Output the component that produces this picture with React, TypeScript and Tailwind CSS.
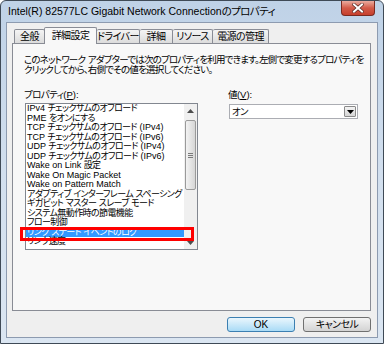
import React from 'react';

const font = "font-['Liberation_Sans','Noto_Sans_CJK_JP',sans-serif] [font-feature-settings:'palt']";

// Japanese runs get tighter spacing, like the narrow kana of the original UI font
function T({ s, tight }: { s: string; tight?: boolean }) {
  const parts = s.split(/([\u3000-\u9fff\uff00-\uffef]+)/);
  return (
    <>
      {parts.map((p, i) =>
        i % 2 === 1 ? (
          <span key={i} className={tight ? 'tracking-[-0.8px]' : 'tracking-[-0.6px]'}>
            {p}
          </span>
        ) : (
          p
        )
      )}
    </>
  );
}

const tabs = [
  { label: '全般', w: 'w-[31px]', active: false },
  { label: '詳細設定', w: 'w-[53px]', active: true },
  { label: 'ドライバー', w: 'w-[43px]', active: false },
  { label: '詳細', w: 'w-[33px]', active: false },
  { label: 'リソース', w: 'w-[40px]', active: false },
  { label: '電源の管理', w: 'w-[56px]', active: false },
];

const items = [
  'IPv4 チェックサムのオフロード',
  'PME をオンにする',
  'TCP チェックサムのオフロード (IPv4)',
  'TCP チェックサムのオフロード (IPv6)',
  'UDP チェックサムのオフロード (IPv4)',
  'UDP チェックサムのオフロード (IPv6)',
  'Wake on Link 設定',
  'Wake On Magic Packet',
  'Wake on Pattern Match',
  'アダプティブ インターフレーム スペーシング',
  'ギガビット マスター スレーブ モード',
  'システム無動作時の節電機能',
  'フロー制御',
  'リンク ステート イベントのログ',
  'リンク速度',
];

export default function App() {
  return (
    <div className={`w-[384px] h-[344px] bg-white ${font} text-black`}>
      <div className="w-[384px] h-[344px] flex flex-col border border-[#3f4a56] rounded-t-[6px] bg-gradient-to-b from-[#bfd2e7] via-[#d2dfee] to-[#dbe6f2] overflow-hidden">
        {/* title bar */}
        <div className="h-[21px] shrink-0 flex items-start">
          <div className="pl-[7px] text-[10.5px] leading-[21px] whitespace-nowrap">
            <T s="Intel(R) 82577LC Gigabit Network Connectionのプロパティ" />
          </div>
          <div className="ml-auto mr-[8px] w-[34px] h-[15px] rounded-b-[4px] border border-t-0 border-[#7a2a20] bg-gradient-to-b from-[#e9ab9f] via-[#d25a48] to-[#c63f2c] flex items-center justify-center">
            <svg width="12" height="10" viewBox="0 0 12 10">
              <path d="M2 1.5 L10 8.5 M10 1.5 L2 8.5" stroke="#5a2a24" strokeWidth="3.4" strokeLinecap="square" />
              <path d="M2 1.5 L10 8.5 M10 1.5 L2 8.5" stroke="#ffffff" strokeWidth="2" strokeLinecap="square" />
            </svg>
          </div>
        </div>

        {/* client area */}
        <div className="mx-[5px] h-[316px] shrink-0 border border-[#8d9bb0] bg-[#efefef] flex flex-col pl-[5px] pr-[6px] pt-[4px]">
          {/* tabs */}
          <div className="h-[16px] shrink-0 flex items-end pl-[2px]">
            {tabs.map((t, i) =>
              t.active ? (
                <div
                  key={t.label}
                  className={`${t.w} h-[17px] -mb-px -ml-px relative z-10 bg-[#f8f8f8] border border-b-0 border-[#898c95] rounded-t-[2px] flex items-center justify-center text-[10px] leading-none whitespace-nowrap`}
                >
                  <T s={t.label} />
                </div>
              ) : (
                <div
                  key={t.label}
                  className={`${t.w} h-[14px] ${i === 0 ? 'border-l' : ''} border-t border-r border-[#898c95] rounded-t-[2px] bg-gradient-to-b from-[#f4f4f4] to-[#dcdcdc] flex items-center justify-center text-[10px] leading-none whitespace-nowrap`}
                >
                  <T s={t.label} />
                </div>
              )
            )}
          </div>

          {/* tab page */}
          <div className="h-[268px] shrink-0 border border-[#898c95] bg-[#f8f8f8] pl-[11px] pt-[11px]">
            <div className="text-[9.5px] leading-[10px] whitespace-nowrap">
              <div>
                <T tight s="このネットワーク アダプターでは次のプロパティを利用できます。左側で変更するプロパティを" />
              </div>
              <div>
                <T tight s="クリックしてから、右側でその値を選択してください。" />
              </div>
            </div>

            <div className="flex mt-[15px] text-[9.5px]">
              <div className="w-[174px]">
                <div className="leading-[10px]">
                  <T s="プロパティ(" />
                  <span className="underline">P</span>):
                </div>
                <div className="mt-[3px] ml-px w-[173px] h-[147px] border border-[#828790] bg-white relative flex">
                  <div className="flex-1 overflow-hidden text-[9px]">
                    {items.map((it, i) => (
                      <div
                        key={it}
                        className={`h-[9.5px] leading-[9.5px] pl-px whitespace-nowrap ${i === 13 ? 'bg-[#3399ff] text-white' : ''}`}
                      >
                        <T s={it} />
                      </div>
                    ))}
                  </div>
                  {/* scrollbar */}
                  <div className="w-[13px] bg-[#f0f0f0] flex flex-col items-center">
                    <div className="h-[14px] w-full flex items-center justify-center">
                      <svg width="7" height="4" viewBox="0 0 7 4">
                        <path d="M0 4 L3.5 0 L7 4 Z" fill="#4d4d4d" />
                      </svg>
                    </div>
                    <div className="mt-[2px] w-[11px] h-[70px] rounded-[2px] border border-[#9a9a9a] bg-gradient-to-r from-[#f3f3f3] to-[#d6d6d6] flex flex-col items-center justify-center gap-[1px]">
                      <div className="w-[5px] h-px bg-[#7a7a7a]" />
                      <div className="w-[5px] h-px bg-[#7a7a7a]" />
                      <div className="w-[5px] h-px bg-[#7a7a7a]" />
                    </div>
                    <div className="flex-1" />
                    <div className="h-[12px] w-full flex items-center justify-center">
                      <svg width="7" height="4" viewBox="0 0 7 4">
                        <path d="M0 0 L3.5 4 L7 0 Z" fill="#4d4d4d" />
                      </svg>
                    </div>
                  </div>
                  {/* annotation */}
                  <div className="absolute left-[-6px] top-[123px] w-[174px] h-[14px] border-[3px] border-[#ff0000]" />
                </div>
              </div>

              <div className="ml-[30px]">
                <div className="leading-[10px]">
                  <T s="値(" />
                  <span className="underline">V</span>):
                </div>
                <div className="mt-[4px] ml-px w-[129px] h-[15px] border border-[#abadb3] bg-white flex items-center">
                  <span className="flex-1 pl-[2px] leading-none">
                    <T s="オン" />
                  </span>
                  <div className="w-[12px] h-[11px] mr-px border border-[#8a8a8a] rounded-[1px] bg-gradient-to-b from-[#f4f4f4] to-[#d4d4d4] flex items-center justify-center">
                    <svg width="7" height="4" viewBox="0 0 7 4">
                      <path d="M0 0 L3.5 4 L7 0 Z" fill="#000" />
                    </svg>
                  </div>
                </div>
              </div>
            </div>
          </div>

          {/* buttons */}
          <div className="mt-[6px] flex justify-end gap-[8px] text-[10px]">
            <button className="w-[68px] h-[15px] rounded-[3px] border border-[#3c7fb1] bg-gradient-to-b from-[#eaf6fd] to-[#a9dbf6] flex items-center justify-center leading-none">
              OK
            </button>
            <button className="w-[68px] h-[15px] rounded-[3px] border border-[#707070] bg-gradient-to-b from-[#f3f3f3] to-[#d3d3d3] flex items-center justify-center leading-none">
              <T s="キャンセル" />
            </button>
          </div>
        </div>
      </div>
    </div>
  );
}
